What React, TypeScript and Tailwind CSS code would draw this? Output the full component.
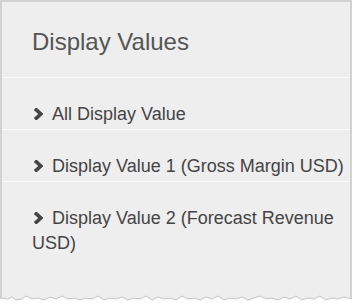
import React from "react";

const items = [
  "All Display Value",
  "Display Value 1 (Gross Margin USD)",
  "Display Value 2 (Forecast Revenue USD)",
];

function Chevron() {
  return (
    <svg width="10" height="12" viewBox="0 0 10 12" className="inline-block align-baseline mr-[9px] ml-[1px]">
      <polyline points="2,0.6 7.8,6 2,11.4" fill="none" stroke="#444" strokeWidth="3.6" strokeLinejoin="miter" />
    </svg>
  );
}

// jagged torn edge along the bottom
const torn =
  "M0,298 L8,299 L12,297 L16,300 L22,299 L26,296 L32,299 L38,298 L44,300 L50,297 L56,299 L62,296 L68,299 L74,298 L80,300 L86,298 L92,299 L98,296 L104,300 L110,298 L116,299 L122,297 L128,300 L134,298 L140,299 L146,296 L152,300 L158,297 L164,299 L170,298 L176,300 L182,296 L188,299 L194,298 L200,300 L206,297 L212,299 L218,296 L224,300 L230,298 L236,299 L242,297 L248,300 L254,298 L260,296 L266,299 L272,298 L278,300 L284,297 L290,299 L296,296 L302,300 L308,298 L314,299 L320,296 L326,300 L332,298 L338,299 L344,297 L352,299";

export default function App() {
  return (
    <div className="w-[352px] h-[304px] bg-white relative overflow-hidden font-['Liberation_Sans',Arial,sans-serif]">
      <div className="h-[304px] bg-[#eeeeee] border-t-2 border-l-2 border-r-2 border-[#d2d2d2]">
        <div className="pl-[30px] pt-[25px] pb-[20px] border-b border-[#fafafa]">
          <h2 className="text-[24px] leading-[30px] text-[#555555]">Display Values</h2>
        </div>
        <ul>
          {items.map((t, i) => (
            <li
              key={t}
              className={`pl-[30px] pr-[2px] pt-[24px] pb-[2px] text-[18px] leading-[25px] text-[#444444] ${i < 2 ? "border-b border-[#fafafa]" : ""}`}
            >
              <Chevron />
              {t}
            </li>
          ))}
        </ul>
      </div>
      <svg width="352" height="304" className="absolute left-0 top-0" viewBox="0 0 352 304">
        <path d={torn + " L352,304 L0,304 Z"} fill="#ffffff" />
        <path d={torn} fill="none" stroke="#c4c4c4" strokeWidth="1" />
      </svg>
    </div>
  );
}
